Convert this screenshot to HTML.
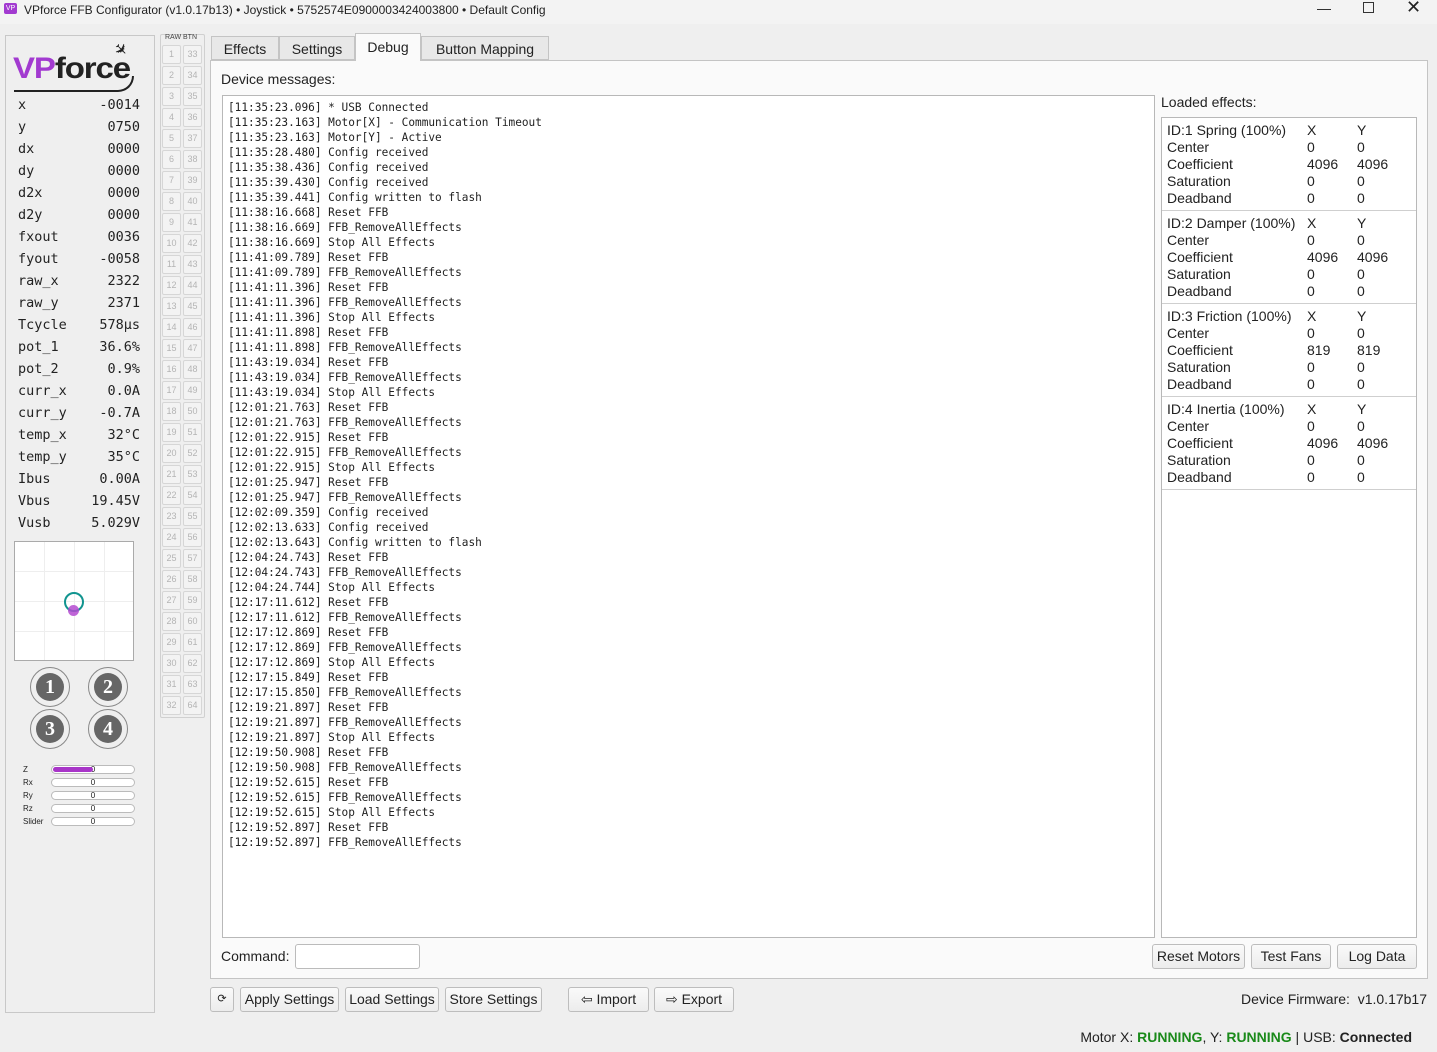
<!DOCTYPE html><html><head><meta charset="utf-8"><style>
*{box-sizing:border-box;margin:0;padding:0}
body{width:1437px;height:1052px;background:#efefef;font-family:"Liberation Sans","DejaVu Sans",sans-serif;font-size:14px;color:#222;position:relative;overflow:hidden;white-space:nowrap}
.a{position:absolute}
.mono{font-family:"DejaVu Sans Mono","Liberation Mono",monospace}
.btn{position:absolute;border:1px solid #bdbdbd;border-radius:3px;background:linear-gradient(#fafafa,#ececec);font-size:14px;text-align:center;line-height:23px;height:25px;color:#222}
.rb{position:absolute;width:19px;height:19px;border:1px solid #d6d6d6;border-radius:2px;background:#f3f3f3;color:#b4b4b4;font-size:9px;text-align:center;line-height:17px}
.lv{position:absolute;left:18px;width:122px;font-size:13.5px}
.lv span{float:right}
.bar{position:absolute;left:51px;width:84px;height:9px;border:1px solid #bbb;border-radius:5px;background:#fff;font-size:8px;text-align:center;line-height:7px}
.bl{position:absolute;left:23px;font-size:8px}
.circ{position:absolute;width:40px;height:40px;border:1px solid #888;border-radius:50%}
.circ div{position:absolute;left:5px;top:5px;width:28px;height:28px;border-radius:50%;background:#666;color:#fff;font:bold 20px "Liberation Serif",serif;text-align:center;line-height:28px}
.eff{position:absolute;left:1162px;width:254px;height:93px;border-bottom:1px solid #cfcfcf;font-size:14px;line-height:17px;padding:4px 5px}
.eff div{display:flex}.eff b{font-weight:normal;width:140px}.eff i{font-style:normal;width:50px}
</style></head><body>
<div class="a" style="left:0;top:0;width:1437px;height:24px;background:#f3f3f3"></div>
<div class="a" style="left:4px;top:3px;width:13px;height:11px;background:#a23ad0;border-radius:2px;color:#fff;font-size:7px;line-height:11px;text-align:center">VP</div>
<div class="a" style="left:24px;top:3px;font-size:12px">VPforce FFB Configurator (v1.0.17b13) • Joystick • 5752574E0900003424003800 • Default Config</div>
<div class="a" style="left:1317px;top:0;font-size:14px">—</div>
<div class="a" style="left:1363px;top:2px;width:11px;height:11px;border:1px solid #333"></div>
<div class="a" style="left:1406px;top:-3px;font-size:18px">✕</div>

<div class="a" style="left:5px;top:35px;width:150px;height:978px;border:1px solid #c8c8c8"></div>
<div class="a" style="left:13px;top:52px;font:900 30px 'Liberation Sans',sans-serif;letter-spacing:-1px;transform:scaleX(1.1);transform-origin:left"><span style="color:#a23ad0">VP</span><span style="color:#222">force</span></div>
<div class="a" style="left:14px;top:76px;width:120px;height:16px;border-bottom:2px solid #222;border-right:2px solid #222;border-radius:0 0 22px 0"></div>
<div class="a" style="left:114px;top:40px;font-size:16px;transform:rotate(45deg)">✈</div>
<div class="mono">
<div class="lv" style="top:97px">x<span>-0014</span></div>
<div class="lv" style="top:119px">y<span>0750</span></div>
<div class="lv" style="top:141px">dx<span>0000</span></div>
<div class="lv" style="top:163px">dy<span>0000</span></div>
<div class="lv" style="top:185px">d2x<span>0000</span></div>
<div class="lv" style="top:207px">d2y<span>0000</span></div>
<div class="lv" style="top:229px">fxout<span>0036</span></div>
<div class="lv" style="top:251px">fyout<span>-0058</span></div>
<div class="lv" style="top:273px">raw_x<span>2322</span></div>
<div class="lv" style="top:295px">raw_y<span>2371</span></div>
<div class="lv" style="top:317px">Tcycle<span>578μs</span></div>
<div class="lv" style="top:339px">pot_1<span>36.6%</span></div>
<div class="lv" style="top:361px">pot_2<span>0.9%</span></div>
<div class="lv" style="top:383px">curr_x<span>0.0A</span></div>
<div class="lv" style="top:405px">curr_y<span>-0.7A</span></div>
<div class="lv" style="top:427px">temp_x<span>32°C</span></div>
<div class="lv" style="top:449px">temp_y<span>35°C</span></div>
<div class="lv" style="top:471px">Ibus<span>0.00A</span></div>
<div class="lv" style="top:493px">Vbus<span>19.45V</span></div>
<div class="lv" style="top:515px">Vusb<span>5.029V</span></div>
</div>
<div class="a" style="left:14px;top:541px;width:120px;height:120px;border:1px solid #aaa;background:#fff;background-image:linear-gradient(90deg,transparent 29px,#eee 29px,#eee 30px,transparent 30px,transparent 59px,#eee 59px,#eee 60px,transparent 60px,transparent 89px,#eee 89px,#eee 90px,transparent 90px),linear-gradient(transparent 29px,#eee 29px,#eee 30px,transparent 30px,transparent 59px,#eee 59px,#eee 60px,transparent 60px,transparent 89px,#eee 89px,#eee 90px,transparent 90px)"></div>
<div class="a" style="left:64px;top:592px;width:20px;height:20px;border:2px solid #11948f;border-radius:50%"></div>
<div class="a" style="left:68px;top:605px;width:11px;height:11px;background:#b44ad0;border-radius:50%;opacity:.85"></div>
<div class="circ" style="left:30px;top:667px"><div>1</div></div>
<div class="circ" style="left:88px;top:667px"><div>2</div></div>
<div class="circ" style="left:30px;top:709px"><div>3</div></div>
<div class="circ" style="left:88px;top:709px"><div>4</div></div>
<div class="bl" style="top:765px">Z</div><div class="bar" style="top:765px"><div class="a" style="left:1px;top:1px;width:40px;height:5px;background:#a836c8;border-radius:3px"></div>0</div>
<div class="bl" style="top:778px">Rx</div><div class="bar" style="top:778px">0</div>
<div class="bl" style="top:791px">Ry</div><div class="bar" style="top:791px">0</div>
<div class="bl" style="top:804px">Rz</div><div class="bar" style="top:804px">0</div>
<div class="bl" style="top:817px">Slider</div><div class="bar" style="top:817px">0</div>

<div class="a" style="left:160px;top:34px;width:45px;height:684px;border:1px solid #d0d0d0;border-radius:2px"></div>
<div class="a" style="left:165px;top:34px;font-size:7px;color:#444">RAW BTN</div>
<div id="rb"></div>

<div class="a" style="left:210px;top:60px;width:1218px;height:919px;border:1px solid #c4c4c4;background:#fafafa"></div>
<div class="a" style="left:211px;top:36px;width:68px;height:24px;border:1px solid #c4c4c4;background:#e8e8e8;text-align:center;line-height:24px">Effects</div>
<div class="a" style="left:279px;top:36px;width:76px;height:24px;border:1px solid #c4c4c4;background:#e8e8e8;text-align:center;line-height:24px">Settings</div>
<div class="a" style="left:355px;top:33px;width:66px;height:28px;border:1px solid #c4c4c4;border-bottom:none;background:#fafafa;text-align:center;line-height:27px">Debug</div>
<div class="a" style="left:421px;top:36px;width:128px;height:24px;border:1px solid #c4c4c4;background:#e8e8e8;text-align:center;line-height:24px">Button Mapping</div>
<div class="a" style="left:221px;top:71px">Device messages:</div>
<div class="a mono" style="left:222px;top:95px;width:933px;height:843px;border:1px solid #b8b8b8;background:#fff;font-size:11.1px;line-height:15px;padding:4px 5px;white-space:pre;color:#222">[11:35:23.096] * USB Connected
[11:35:23.163] Motor[X] - Communication Timeout
[11:35:23.163] Motor[Y] - Active
[11:35:28.480] Config received
[11:35:38.436] Config received
[11:35:39.430] Config received
[11:35:39.441] Config written to flash
[11:38:16.668] Reset FFB
[11:38:16.669] FFB_RemoveAllEffects
[11:38:16.669] Stop All Effects
[11:41:09.789] Reset FFB
[11:41:09.789] FFB_RemoveAllEffects
[11:41:11.396] Reset FFB
[11:41:11.396] FFB_RemoveAllEffects
[11:41:11.396] Stop All Effects
[11:41:11.898] Reset FFB
[11:41:11.898] FFB_RemoveAllEffects
[11:43:19.034] Reset FFB
[11:43:19.034] FFB_RemoveAllEffects
[11:43:19.034] Stop All Effects
[12:01:21.763] Reset FFB
[12:01:21.763] FFB_RemoveAllEffects
[12:01:22.915] Reset FFB
[12:01:22.915] FFB_RemoveAllEffects
[12:01:22.915] Stop All Effects
[12:01:25.947] Reset FFB
[12:01:25.947] FFB_RemoveAllEffects
[12:02:09.359] Config received
[12:02:13.633] Config received
[12:02:13.643] Config written to flash
[12:04:24.743] Reset FFB
[12:04:24.743] FFB_RemoveAllEffects
[12:04:24.744] Stop All Effects
[12:17:11.612] Reset FFB
[12:17:11.612] FFB_RemoveAllEffects
[12:17:12.869] Reset FFB
[12:17:12.869] FFB_RemoveAllEffects
[12:17:12.869] Stop All Effects
[12:17:15.849] Reset FFB
[12:17:15.850] FFB_RemoveAllEffects
[12:19:21.897] Reset FFB
[12:19:21.897] FFB_RemoveAllEffects
[12:19:21.897] Stop All Effects
[12:19:50.908] Reset FFB
[12:19:50.908] FFB_RemoveAllEffects
[12:19:52.615] Reset FFB
[12:19:52.615] FFB_RemoveAllEffects
[12:19:52.615] Stop All Effects
[12:19:52.897] Reset FFB
[12:19:52.897] FFB_RemoveAllEffects</div>
<div class="a" style="left:1161px;top:94px">Loaded effects:</div>
<div class="a" style="left:1161px;top:117px;width:256px;height:821px;border:1px solid #b8b8b8;background:#fff"></div>
<div class="eff" style="top:118px"><div><b>ID:1 Spring (100%)</b><i>X</i><i>Y</i></div><div><b>Center</b><i>0</i><i>0</i></div><div><b>Coefficient</b><i>4096</i><i>4096</i></div><div><b>Saturation</b><i>0</i><i>0</i></div><div><b>Deadband</b><i>0</i><i>0</i></div></div>
<div class="eff" style="top:211px"><div><b>ID:2 Damper (100%)</b><i>X</i><i>Y</i></div><div><b>Center</b><i>0</i><i>0</i></div><div><b>Coefficient</b><i>4096</i><i>4096</i></div><div><b>Saturation</b><i>0</i><i>0</i></div><div><b>Deadband</b><i>0</i><i>0</i></div></div>
<div class="eff" style="top:304px"><div><b>ID:3 Friction (100%)</b><i>X</i><i>Y</i></div><div><b>Center</b><i>0</i><i>0</i></div><div><b>Coefficient</b><i>819</i><i>819</i></div><div><b>Saturation</b><i>0</i><i>0</i></div><div><b>Deadband</b><i>0</i><i>0</i></div></div>
<div class="eff" style="top:397px"><div><b>ID:4 Inertia (100%)</b><i>X</i><i>Y</i></div><div><b>Center</b><i>0</i><i>0</i></div><div><b>Coefficient</b><i>4096</i><i>4096</i></div><div><b>Saturation</b><i>0</i><i>0</i></div><div><b>Deadband</b><i>0</i><i>0</i></div></div>

<div class="a" style="left:221px;top:948px">Command:</div>
<div class="a" style="left:295px;top:944px;width:125px;height:25px;border:1px solid #bbb;border-radius:3px;background:#fff"></div>
<div class="btn" style="left:1152px;top:944px;width:93px">Reset Motors</div>
<div class="btn" style="left:1251px;top:944px;width:80px">Test Fans</div>
<div class="btn" style="left:1337px;top:944px;width:80px">Log Data</div>

<div class="btn" style="left:210px;top:987px;width:24px;font-size:11px">⟳</div>
<div class="btn" style="left:240px;top:987px;width:99px">Apply Settings</div>
<div class="btn" style="left:345px;top:987px;width:94px">Load Settings</div>
<div class="btn" style="left:445px;top:987px;width:97px">Store Settings</div>
<div class="btn" style="left:568px;top:987px;width:81px">⇦ Import</div>
<div class="btn" style="left:654px;top:987px;width:80px">⇨ Export</div>
<div class="a" style="right:10px;top:991px">Device Firmware:&nbsp; v1.0.17b17</div>
<div class="a" style="right:25px;top:1029px">Motor X: <b style="color:#1a8a1a">RUNNING</b>, Y: <b style="color:#1a8a1a">RUNNING</b> | USB: <b>Connected</b></div>
<script>
var h='';for(var i=0;i<32;i++){var t=45+i*21;h+='<div class="rb" style="left:162px;top:'+t+'px">'+(i+1)+'</div><div class="rb" style="left:183px;top:'+t+'px">'+(i+33)+'</div>';}
document.getElementById('rb').innerHTML=h;
</script>
</body></html>
